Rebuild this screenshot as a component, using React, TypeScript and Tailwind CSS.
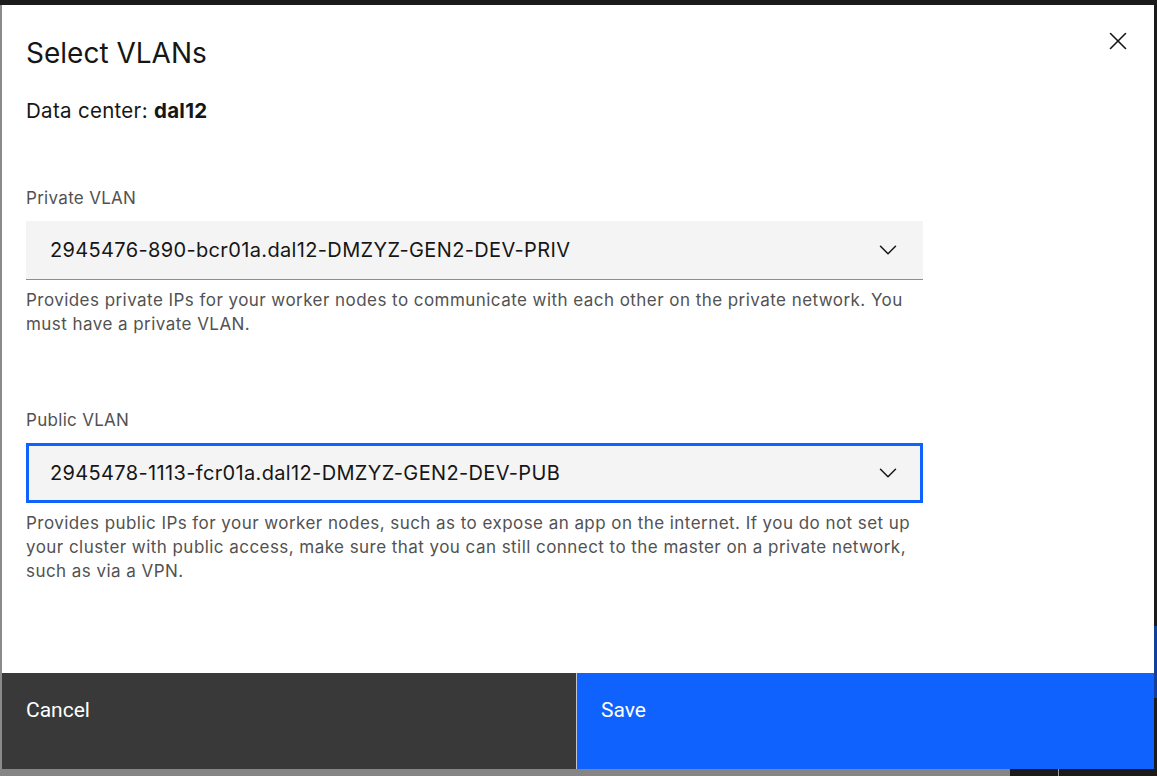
import { ChevronDown, X } from "lucide-react";

const sans = "font-['Inter','Noto_Sans',sans-serif]";

function VlanSelect({
  label,
  value,
  helper,
  focused,
}: {
  label: string;
  value: string;
  helper: string;
  focused?: boolean;
}) {
  return (
    <div className="w-[897px]">
      <div className="text-[17px] leading-[20px] tracking-[0.3px] text-[#525252] mb-[13px]">{label}</div>
      <div
        className={
          focused
            ? "h-[60px] bg-[#f4f4f4] border-[3px] border-[#0f62fe] flex items-center justify-between pl-[21px] pr-[17px]"
            : "h-[59px] bg-[#f4f4f4] border-b border-[#8d8d8d] flex items-center justify-between pl-[24px] pr-[20px]"
        }
      >
        <span className="text-[20px] tracking-[0.35px] text-[#161616]">{value}</span>
        <ChevronDown className="w-[30px] h-[30px] text-[#161616]" strokeWidth={1.2} />
      </div>
      <p className="mt-[8px] text-[17px] leading-[24px] tracking-[0.45px] text-[#525252]">{helper}</p>
    </div>
  );
}

export default function App() {
  return (
    <div className={`relative w-[1157px] h-[776px] bg-[#1b1b1b] overflow-hidden ${sans}`}>
      {/* backdrop bits peeking around the modal */}
      <div className="absolute left-0 top-[5px] w-[2px] h-[771px] bg-[#8a8a8a]" />
      <div className="absolute left-0 bottom-0 w-[1010px] h-[7px] bg-[#858585]" />
      <div className="absolute left-[1058px] bottom-0 w-px h-[7px] bg-[#9a9a9a]" />
      <div className="absolute right-0 top-[626px] w-[3px] h-[72px] bg-[#123f9c]" />

      <div className="absolute left-[2px] top-[5px] w-[1152px] h-[764px] bg-white flex flex-col">
        <button className="absolute right-[22px] top-[22px] w-[28px] h-[28px] flex items-center justify-center text-[#161616]">
          <X className="w-[30px] h-[30px] shrink-0" strokeWidth={1.3} />
        </button>

        <div className="flex-1 pl-[24px] pt-[32px]">
          <h2 className="text-[28px] leading-[32px] text-[#161616]">Select VLANs</h2>
          <div className="mt-[28px] text-[20.5px] leading-[28px] tracking-[0.3px] text-[#161616]">
            Data center: <span className="font-bold">dal12</span>
          </div>

          <div className="mt-[63px]">
            <VlanSelect
              label="Private VLAN"
              value="2945476-890-bcr01a.dal12-DMZYZ-GEN2-DEV-PRIV"
              helper="Provides private IPs for your worker nodes to communicate with each other on the private network. You must have a private VLAN."
            />
          </div>

          <div className="mt-[74px]">
            <VlanSelect
              label="Public VLAN"
              value="2945478-1113-fcr01a.dal12-DMZYZ-GEN2-DEV-PUB"
              focused
              helper="Provides public IPs for your worker nodes, such as to expose an app on the internet. If you do not set up your cluster with public access, make sure that you can still connect to the master on a private network, such as via a VPN."
            />
          </div>
        </div>

        <div className="h-[96px] flex font-['Roboto',sans-serif]">
          <button className="w-[575px] bg-[#393939] text-white text-[21px] text-left pl-[24px] pb-[20px] border-r border-[#c6c6c6]">
            Cancel
          </button>
          <button className="flex-1 bg-[#0f62fe] text-white text-[21px] text-left pl-[24px] pb-[20px]">
            Save
          </button>
        </div>
      </div>
    </div>
  );
}
